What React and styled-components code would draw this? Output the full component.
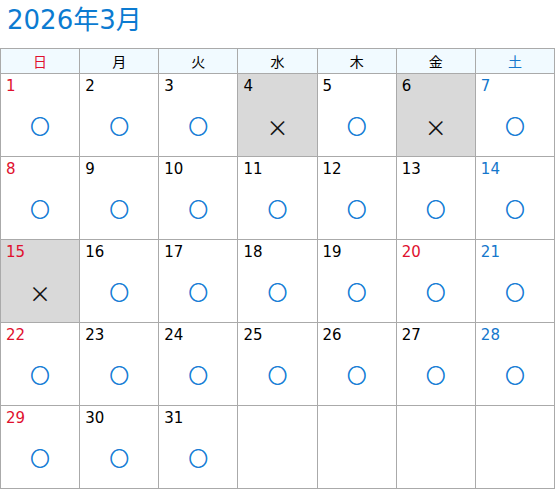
import React from 'react';
import styled, { createGlobalStyle } from 'styled-components';

const Global = createGlobalStyle`
  body {
    margin: 0;
    background: #fff;
    font-family: 'DejaVu Sans', 'Noto Sans CJK JP', sans-serif;
  }
`;

const Wrap = styled.div`
  width: 556px;
`;

const Title = styled.h1`
  margin: 0;
  height: 48px;
  padding: 1px 0 0 7px;
  box-sizing: border-box;
  font-size: 26px;
  font-weight: 400;
  line-height: 38px;
  color: #0b7bd1;
`;

const Table = styled.table`
  width: 555px;
  border-collapse: collapse;
  table-layout: fixed;
`;

const Head = styled.th`
  height: 24px;
  padding: 0;
  border: 1px solid #aaa;
  background: #f1faff;
  font-family: 'Noto Sans CJK JP', sans-serif;
  font-size: 14px;
  font-weight: 400;
  color: ${(p) => p.$tone || '#000'};
`;

const Cell = styled.td`
  height: 82px;
  padding: 0;
  border: 1px solid #aaa;
  vertical-align: top;
  background: ${(p) => (p.$closed ? '#d9d9d9' : '#fff')};
`;

const Day = styled.div`
  padding: 2px 0 0 5px;
  font-size: 15px;
  line-height: 20px;
  color: ${(p) => p.$tone || '#000'};
`;

const Mark = styled.div`
  margin-top: 17px;
  height: 26px;
  text-align: center;
  font-family: 'Noto Sans CJK JP', sans-serif;
  font-size: ${(p) => (p.$closed ? '22px' : '19px')};
  line-height: 26px;
  color: ${(p) => (p.$closed ? '#111' : '#1a7fd6')};
  -webkit-text-stroke: ${(p) => (p.$closed ? '0' : '0.7px')};
`;

const RED = '#e0102e';
const BLUE = '#1577cc';
const weekdays = ['日', '月', '火', '水', '木', '金', '土'];
const closed = [4, 6, 15];

const tone = (i) => (i === 0 ? RED : i === 6 ? BLUE : null);

const weeks = [];
let day = 1;
for (let w = 0; w < 5; w++) {
  const row = [];
  for (let i = 0; i < 7; i++) {
    row.push(day <= 31 ? day : null);
    day++;
  }
  weeks.push(row);
}

export default function App() {
  return (
    <Wrap>
      <Global />
      <Title>2026年3月</Title>
      <Table>
        <thead>
          <tr>
            {weekdays.map((d, i) => (
              <Head key={d} $tone={tone(i)}>
                {d}
              </Head>
            ))}
          </tr>
        </thead>
        <tbody>
          {weeks.map((row, w) => (
            <tr key={w}>
              {row.map((d, i) => {
                const isClosed = closed.includes(d);
                return (
                  <Cell key={i} $closed={isClosed}>
                    {d && (
                      <>
                        <Day $tone={d === 20 ? RED : tone(i)}>{d}</Day>
                        <Mark $closed={isClosed}>{isClosed ? '×' : '○'}</Mark>
                      </>
                    )}
                  </Cell>
                );
              })}
            </tr>
          ))}
        </tbody>
      </Table>
    </Wrap>
  );
}
